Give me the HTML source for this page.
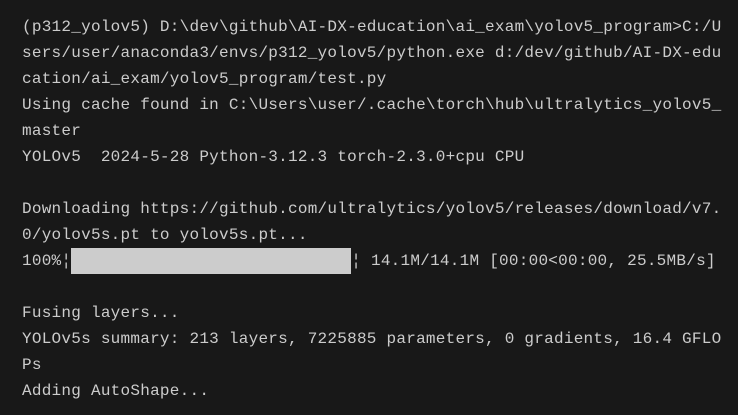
<!DOCTYPE html>
<html><head><style>
html,body{margin:0;padding:0;background:#181818;width:738px;height:415px;overflow:hidden}
pre{margin:0;padding:14px 0 0 22px;font-family:"Liberation Mono",monospace;font-size:16px;letter-spacing:0.25px;line-height:26px;color:#cccccc;white-space:pre}
.bar{display:inline-block;width:280px;height:26px;background:#cccccc;vertical-align:top}
</style></head><body><pre>(p312_yolov5) D:\dev\github\AI-DX-education\ai_exam\yolov5_program&gt;C:/U
sers/user/anaconda3/envs/p312_yolov5/python.exe d:/dev/github/AI-DX-edu
cation/ai_exam/yolov5_program/test.py
Using cache found in C:\Users\user/.cache\torch\hub\ultralytics_yolov5_
master
YOLOv5  2024-5-28 Python-3.12.3 torch-2.3.0+cpu CPU

Downloading https://github.com/ultralytics/yolov5/releases/download/v7.
0/yolov5s.pt to yolov5s.pt...
100%¦<span class="bar"></span>¦ 14.1M/14.1M [00:00&lt;00:00, 25.5MB/s]

Fusing layers...
YOLOv5s summary: 213 layers, 7225885 parameters, 0 gradients, 16.4 GFLO
Ps
Adding AutoShape...</pre></body></html>
